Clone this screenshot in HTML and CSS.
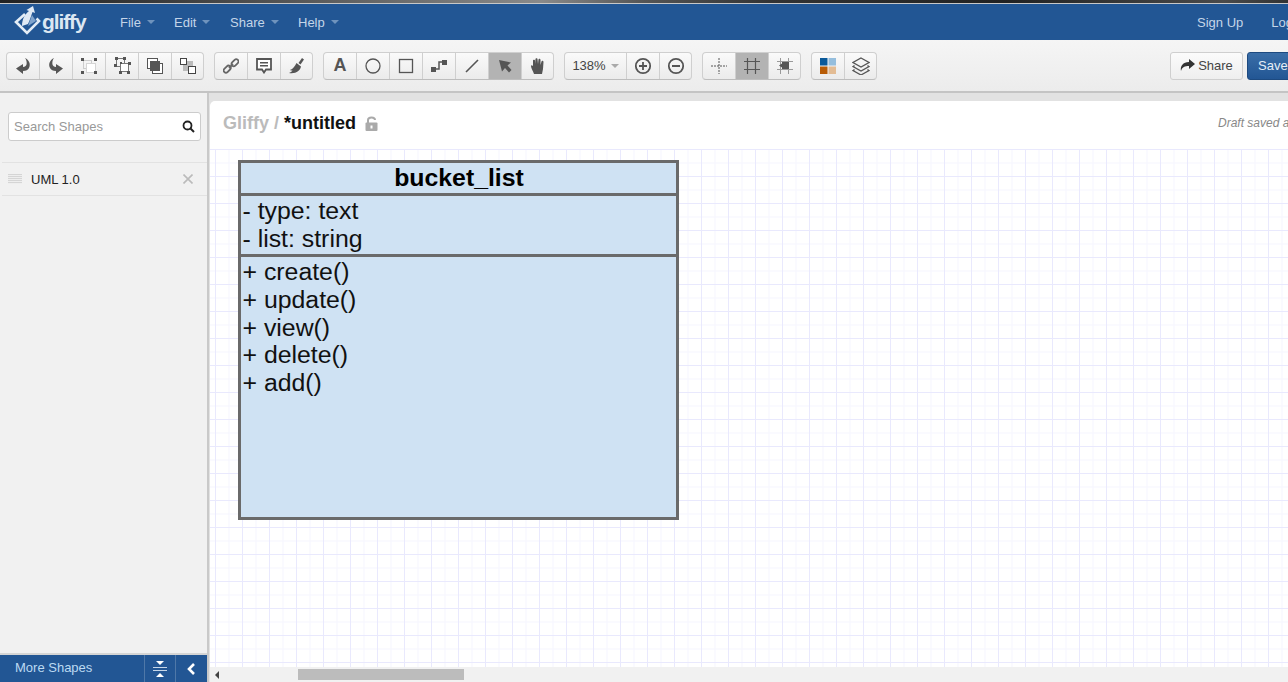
FILE: index.html
```html
<!DOCTYPE html>
<html lang="en">
<head>
    <meta charset="UTF-8">
    <title>Gliffy</title>
    <link rel="stylesheet" href="styles.css">
</head>
<body>
    <div id="app">
        <div class="top-strip"></div>
        <div class="navbar">
            <div class="logo">
                <svg width="28" height="30" viewBox="0 0 28 30">
                    <path d="M11 8 L2 16 L13 27 L25 15 L22.500 12.500" fill="none" stroke="#e4edf6" stroke-width="2.600"/>
                    <path d="M8 20 C8 13 11 8 15 5 L12.500 4 L19 0 L21 7 L18.500 6 C17 10 16 14 14 18 Z" fill="#dfe9f4"/>
                    <path d="M14 20 L18 9 L22 15 Z" fill="#7fa3cc"/>
                </svg>
                <span class="logo-text">gliffy</span>
            </div>
            <div class="menu">
                <span class="menu-item item-file">File<i class="caret"></i></span>
                <span class="menu-item item-edit">Edit<i class="caret"></i></span>
                <span class="menu-item item-share">Share<i class="caret"></i></span>
                <span class="menu-item">Help<i class="caret"></i></span>
            </div>
            <div class="account">
                <span class="signup">Sign Up</span>
                <span>Log In</span>
            </div>
        </div>

        <div class="toolbar">
            <div class="btn-group">
                <button class="tool"><svg width="16" height="18" viewBox="0 0 16 18"><path d="M10 1 C14 3 16 7 14 11 C13 13 11 14 8 14 V17 L1 11.500 L8 7 V10 C10 10 11 9 11.500 7.500 C12 5.500 11.500 3 10 1 Z" fill="#555"/></svg></button>
                <button class="tool"><svg width="16" height="18" viewBox="0 0 16 18"><path d="M6 1 C2 3 0 7 2 11 C3 13 5 14 8 14 V17 L15 11.500 L8 7 V10 C6 10 5 9 4.500 7.500 C4 5.500 4.500 3 6 1 Z" fill="#555"/></svg></button>
                <button class="tool"><svg width="16" height="16" viewBox="0 0 16 16"><rect x="2.500" y="2.500" width="8" height="8" fill="none" stroke="#ccc"/><rect x="5.500" y="5.500" width="9" height="9" fill="#fff" stroke="#d5d5d5"/><path d="M0 0h3v3H0zM13 0h3v3h-3zM0 13h3v3H0zM13 13h3v3h-3z" fill="#555"/></svg></button>
                <button class="tool"><svg width="17" height="17" viewBox="0 0 17 17"><rect x="2.500" y="1.500" width="8" height="8" fill="none" stroke="#777"/><rect x="6.500" y="6.500" width="8" height="8" fill="#fff" stroke="#777"/><path d="M1 0h3v3H1zM9 0h3v3H9zM0 7h3v3H0zM6 5h2v2H6zM14 5h3v3h-3zM5 14h3v3H5zM13 14h3v3h-3z" fill="#555"/></svg></button>
                <button class="tool"><svg width="16" height="16" viewBox="0 0 16 16"><rect x="0.500" y="0.500" width="10" height="10" fill="#fff" stroke="#555"/><rect x="5.500" y="5.500" width="10" height="10" fill="#fff" stroke="#555"/><rect x="3" y="3" width="10" height="10" fill="#555"/></svg></button>
                <button class="tool"><svg width="16" height="16" viewBox="0 0 16 16"><rect x="3" y="3" width="10" height="10" fill="#bbb"/><rect x="0.500" y="0.500" width="6" height="6" fill="#fff" stroke="#444"/><rect x="8.500" y="8.500" width="7" height="7" fill="#fff" stroke="#444"/></svg></button>
            </div>
            <div class="btn-group">
                <button class="tool"><svg width="16" height="16" viewBox="0 0 16 16"><g fill="none" stroke="#666" stroke-width="1.800"><rect x="0" y="9" width="8" height="4.500" rx="2.200" transform="rotate(-45 4 11)"/><rect x="8" y="2.500" width="8" height="4.500" rx="2.200" transform="rotate(-45 12 4.800)"/><path d="M6 10 L10 6"/></g></svg></button>
                <button class="tool"><svg width="16" height="16" viewBox="0 0 16 16"><path d="M1 1h14v10.500h-5l-2 3-2-3H1z" fill="#fff" stroke="#555" stroke-width="1.800"/><path d="M4 4.800h8M4 7.800h8" stroke="#555" stroke-width="1.400"/></svg></button>
                <button class="tool"><svg width="18" height="18" viewBox="0 0 18 18"><path d="M10.500 6 L14 1 L16 2.500 L12.500 7.500 Z" fill="#555"/><path d="M8.500 6 L13 9.500 C12 14 8 17 1 16 C3.500 15 4.500 13.500 4.500 13.500 C3.500 13.500 2.500 13.500 2 13 C5 12 7 9 8.500 6 Z" fill="#555"/></svg></button>
            </div>
            <div class="btn-group">
                <button class="tool letter">A</button>
                <button class="tool"><svg width="16" height="16" viewBox="0 0 16 16"><circle cx="8" cy="8" r="7" fill="none" stroke="#555" stroke-width="1.300"/></svg></button>
                <button class="tool"><svg width="16" height="16" viewBox="0 0 16 16"><rect x="1.500" y="1.500" width="13" height="13" fill="none" stroke="#555" stroke-width="1.300"/></svg></button>
                <button class="tool"><svg width="18" height="14" viewBox="0 0 18 14"><path d="M1 8h5v5H1zM12 1h5v5h-5z" fill="#555"/><path d="M6 10h3V3h3" fill="none" stroke="#555" stroke-width="1.500"/></svg></button>
                <button class="tool"><svg width="16" height="16" viewBox="0 0 16 16"><path d="M2 14 L14 2" stroke="#555" stroke-width="1.600"/></svg></button>
                <button class="tool active"><svg width="14" height="14" viewBox="0 0 14 14"><path d="M1 1 L13 3.500 L9.500 6.500 L13.500 11 L11 13.500 L7 9 L4 12.500 Z" fill="#555"/></svg></button>
                <button class="tool"><svg width="14" height="16" viewBox="0 0 14 16"><path d="M3 16 C2 13 0 10 0 8 C0 7 1 7 2 8 L2 2.500 C2 1.500 4 1.500 4 2.500 L4 6 L4.500 1 C4.500 0 6.500 0 6.500 1 L7 6 L7.500 1.500 C7.500 0.500 9.500 0.500 9.500 2 L9.500 7 L10.500 3.500 C10.500 2.500 12.500 2.500 12.500 4 L12 11 L11 16 Z" fill="#555"/></svg></button>
            </div>
            <div class="btn-group">
                <button class="tool zoom-level">138%<i class="caret grey"></i></button>
                <button class="tool"><svg width="18" height="18" viewBox="0 0 18 18"><circle cx="9" cy="9" r="7.200" fill="none" stroke="#555" stroke-width="1.800"/><path d="M5 9h8M9 5v8" stroke="#555" stroke-width="1.800"/></svg></button>
                <button class="tool"><svg width="18" height="18" viewBox="0 0 18 18"><circle cx="9" cy="9" r="7.200" fill="none" stroke="#555" stroke-width="1.800"/><path d="M5 9h8" stroke="#555" stroke-width="1.800"/></svg></button>
            </div>
            <div class="btn-group">
                <button class="tool"><svg width="16" height="16" viewBox="0 0 16 16"><path d="M0 8h16M8 0v16" stroke="#555" stroke-dasharray="2 1"/></svg></button>
                <button class="tool active"><svg width="16" height="16" viewBox="0 0 16 16"><path d="M0 3.500h16M0 11.500h16M3.500 0v16M11.500 0v16" stroke="#555" stroke-width="1.200"/></svg></button>
                <button class="tool"><svg width="16" height="16" viewBox="0 0 16 16"><path d="M0 3.500h16M0 11.500h16M3.500 0v16M11.500 0v16" stroke="#999"/><rect x="5" y="4" width="7" height="7" fill="#555"/><path d="M2 7.500 L5 5.500 V9.500 Z" fill="#555"/></svg></button>
            </div>
            <div class="btn-group">
                <button class="tool"><svg width="16" height="16" viewBox="0 0 16 16"><rect width="7.500" height="7.500" fill="#0b5a9a"/><rect x="8.500" width="7.500" height="7.500" fill="#95bedd"/><rect y="8.500" width="7.500" height="7.500" fill="#b85c06"/><rect x="8.500" y="8.500" width="7.500" height="7.500" fill="#e3bc94"/></svg></button>
                <button class="tool"><svg width="18" height="18" viewBox="0 0 18 18"><g fill="none" stroke="#555" stroke-width="1.300"><path d="M9 1 L17 5.500 L9 10 L1 5.500 Z"/><path d="M2.500 8.500 L1 9.500 L9 14 L17 9.500 L15.500 8.500"/><path d="M2.500 12.500 L1 13.500 L9 18 L17 13.500 L15.500 12.500"/></g></svg></button>
            </div>
            <button class="share-btn"><svg width="15" height="13" viewBox="0 0 15 13"><path d="M9 0 L15 5 L9 10 V7 C5 7 2 8 1 12 C0 7 3 3 9 3 Z" fill="#333"/></svg>Share</button>
            <button class="save-btn">Save</button>
        </div>

        <div class="shadow-bar"></div>

        <div class="workspace">
            <div class="sidebar">
                <div class="search">
                    <span class="search-hint">Search Shapes</span>
                    <svg width="13" height="13" viewBox="0 0 13 13"><circle cx="5.500" cy="5.500" r="4" fill="none" stroke="#222" stroke-width="1.800"/><path d="M8.500 8.500 L12 12" stroke="#222" stroke-width="2"/></svg>
                </div>
                <div class="library-row">
                    <span class="handle"></span>
                    <span class="library-name">UML 1.0</span>
                    <svg width="10" height="10" viewBox="0 0 10 10"><path d="M0.500 0.500 L9.500 9.500 M9.500 0.500 L0.500 9.500" stroke="#bbb" stroke-width="1.600"/></svg>
                </div>
                <div class="more-shapes">
                    <span class="more-label">More Shapes</span>
                    <span class="more-btn"><svg width="14" height="16" viewBox="0 0 14 16"><path d="M3 0h8L7 4zM7 12l4 4H3z" fill="#fff"/><path d="M0 6.500h14M0 9.500h14" stroke="#c5d6e8"/></svg></span>
                    <span class="more-btn"><svg width="10" height="12" viewBox="0 0 10 12"><path d="M8 1 L3 6 L8 11" fill="none" stroke="#fff" stroke-width="2.600"/></svg></span>
                </div>
            </div>

            <div class="main-panel">
                <div class="doc-header">
                    <span class="doc-brand">Gliffy / </span><span class="doc-name">*untitled</span>
                    <svg class="lock" width="13" height="15" viewBox="0 0 13 15"><path d="M3 7V4C3 0.500 10 0.500 10 4" fill="none" stroke="#aaa" stroke-width="2"/><rect x="0.500" y="6.500" width="12" height="8.500" rx="1" fill="#aaa"/><rect x="5.500" y="9.500" width="2" height="3" fill="#fff"/></svg>
                    <span class="draft">Draft saved at 3:42 PM</span>
                </div>
                <div class="canvas">
                    <div class="uml-class">
                        <div class="uml-title">bucket_list</div>
                        <div class="uml-attrs">- type: text<br>- list: string</div>
                        <div class="uml-methods">+ create()<br>+ update()<br>+ view()<br>+ delete()<br>+ add()</div>
                    </div>
                </div>
                <div class="scrollbar">
                    <i class="scroll-arrow"></i>
                    <div class="scroll-thumb"></div>
                </div>
            </div>
        </div>
    </div>
</body>
</html>
```

FILE: styles.css
```css
html, body {
    margin: 0;
    padding: 0;
    overflow: hidden;
}
body {
    font-family: "Liberation Sans", Arial, sans-serif;
    background: #e2e2e2;
}
#app {
    width: 1288px;
    height: 682px;
    display: flex;
    flex-direction: column;
    overflow: hidden;
}
.top-strip {
    height: 4px;
    box-sizing: border-box;
    border-bottom: 1px solid #c8c8c8;
    background: linear-gradient(90deg, #222 0, #3a3a3a 12%, #8a8a8a 42%, #555 50%, #333 60%, #222 78%, #4a4a4a 95%, #333 100%);
    flex-shrink: 0;
}
.navbar {
    height: 36px;
    background: #225694;
    display: flex;
    align-items: center;
    color: #c4d5e8;
    font-size: 13px;
    flex-shrink: 0;
}
.logo {
    display: flex;
    align-items: center;
    width: 120px;
    padding-left: 14px;
    box-sizing: border-box;
    color: #dce7f2;
}
.logo svg {
    margin-top: -3px;
}
.logo-text {
    font-size: 21px;
    font-weight: bold;
    letter-spacing: -1.100px;
}
.menu {
    display: flex;
}
.menu-item {
    display: inline-flex;
    align-items: center;
}
.item-file { width: 54px; }
.item-edit { width: 56px; }
.item-share { width: 68px; }
.caret {
    width: 0;
    height: 0;
    margin-left: 6px;
    border-left: 4px solid transparent;
    border-right: 4px solid transparent;
    border-top: 4px solid #6f93bd;
}
.caret.grey {
    border-top-color: #aaa;
    margin-left: 5px;
}
.account {
    margin-left: auto;
    display: flex;
    gap: 28px;
    width: 91px;
    white-space: nowrap;
}
.toolbar {
    height: 53px;
    background: linear-gradient(#f5f5f5, #ececec);
    border-bottom: 2px solid #c4c4c4;
    box-sizing: border-box;
    display: flex;
    align-items: center;
    gap: 10px;
    padding: 0 0 0 6px;
    flex-shrink: 0;
}
.btn-group {
    display: flex;
    height: 28px;
    border: 1px solid #cfcfcf;
    border-bottom-color: #bdbdbd;
    border-radius: 4px;
    box-sizing: border-box;
    overflow: hidden;
    flex-shrink: 0;
    background: linear-gradient(#fafafa, #ebebeb);
}
.tool {
    width: 33px;
    padding: 0;
    border: 0;
    border-right: 1px solid #cfcfcf;
    background: transparent;
    display: flex;
    align-items: center;
    justify-content: center;
    font-family: inherit;
    flex-shrink: 0;
}
.tool:last-child {
    width: 31px;
    border-right: 0;
}
.tool.active {
    background: #b3b3b3;
}
.letter {
    font-size: 18px;
    font-weight: bold;
    color: #555;
}
.zoom-level {
    width: 62px;
    font-size: 13px;
    color: #444;
}
.share-btn {
    margin-left: 283px;
    width: 73px;
    height: 28px;
    border: 1px solid #cfcfcf;
    border-radius: 3px;
    background: linear-gradient(#fbfbfb, #eee);
    font-family: inherit;
    font-size: 13px;
    color: #444;
    display: flex;
    align-items: center;
    justify-content: center;
    gap: 3px;
    padding: 0;
    flex-shrink: 0;
}
.save-btn {
    margin-left: -6px;
    width: 60px;
    height: 28px;
    border: 1px solid #1d4a80;
    border-radius: 3px;
    background: linear-gradient(#3a6ea8, #225694);
    color: #e6eef7;
    font-family: inherit;
    font-size: 13px;
    text-align: left;
    padding: 0 0 0 10px;
    flex-shrink: 0;
}
.shadow-bar {
    height: 8px;
    background: #e2e2e2;
    flex-shrink: 0;
}
.workspace {
    flex: 1;
    display: flex;
    min-height: 0;
}
.sidebar {
    width: 207px;
    margin-top: -8px;
    background: #f1f1f1;
    border-right: 2px solid #c9c9c9;
    display: flex;
    flex-direction: column;
    flex-shrink: 0;
}
.search {
    margin: 19px 6px 0 8px;
    height: 29px;
    background: #fff;
    border: 1px solid #ccc;
    border-radius: 3px;
    box-sizing: border-box;
    display: flex;
    align-items: center;
    justify-content: space-between;
    padding: 0 5px 0 5px;
}
.search-hint {
    font-size: 13px;
    color: #999;
}
.library-row {
    margin: 21px 0 0 2px;
    height: 34px;
    border-top: 1px solid #e2e2e2;
    border-bottom: 1px solid #e2e2e2;
    box-sizing: border-box;
    display: flex;
    align-items: center;
    padding: 0 14px 0 6px;
}
.handle {
    width: 14px;
    height: 10px;
    background: repeating-linear-gradient(#d5d5d5 0, #d5d5d5 1px, #eee 1px, #eee 2px);
}
.library-name {
    font-size: 13px;
    color: #222;
    margin-left: 9px;
    flex: 1;
}
.more-shapes {
    margin-top: auto;
    height: 29px;
    border-top: 2px solid #d5d5d5;
    background: #225694;
    box-sizing: border-box;
    display: flex;
    color: #bcdaf2;
    font-size: 13px;
}
.more-label {
    width: 144px;
    padding-left: 15px;
    box-sizing: border-box;
    line-height: 25px;
}
.more-btn {
    width: 31px;
    border-left: 1px solid #4f78a8;
    box-sizing: border-box;
    display: flex;
    align-items: center;
    justify-content: center;
}
.main-panel {
    flex: 1;
    min-width: 0;
    margin-left: 1px;
    display: flex;
    flex-direction: column;
}
.doc-header {
    height: 48px;
    background: #fff;
    border-top-left-radius: 5px;
    display: flex;
    align-items: center;
    padding: 0 0 4px 13px;
    box-sizing: border-box;
    font-size: 18px;
    font-weight: bold;
    white-space: pre;
    flex-shrink: 0;
    overflow: hidden;
}
.doc-brand {
    color: #bbb;
}
.doc-name {
    color: #111;
}
.lock {
    margin: 1px 0 0 9px;
    flex-shrink: 0;
}
.draft {
    margin-left: 840px;
    font-size: 12px;
    font-weight: normal;
    font-style: italic;
    color: #888;
    flex-shrink: 0;
}
.canvas {
    position: relative;
    flex: 1;
    background-color: #fff;
    background-image:
        linear-gradient(90deg, #e9e9fd 1px, transparent 1px),
        linear-gradient(#e9e9fd 1px, transparent 1px),
        linear-gradient(90deg, #f5f5fe 1px, transparent 1px),
        linear-gradient(#f5f5fe 1px, transparent 1px);
    background-size: 27px 27px, 27px 27px, 13.500px 13.500px, 13.500px 13.500px;
    background-position: 5px 0, 5px 0, 5px 0, 5px 0;
    overflow: hidden;
}
.uml-class {
    position: absolute;
    left: 28px;
    top: 11px;
    width: 441px;
    height: 360px;
    border: 3px solid #6a6a6a;
    box-sizing: border-box;
    background: #cfe2f3;
    color: #111;
    font-size: 24.840px;
    line-height: 27.600px;
    display: flex;
    flex-direction: column;
}
.uml-title {
    height: 32.500px;
    border-bottom: 3px solid #6a6a6a;
    box-sizing: border-box;
    text-align: center;
    font-weight: bold;
    color: #000;
    padding: 1px 0 0 1px;
}
.uml-attrs {
    height: 61px;
    border-bottom: 3px solid #6a6a6a;
    box-sizing: border-box;
    padding: 1.500px 0 0 1.500px;
}
.uml-methods {
    padding: 1.900px 0 0 1.500px;
}
.scrollbar {
    height: 15px;
    background: #f1f1f1;
    display: flex;
    align-items: center;
    flex-shrink: 0;
}
.scroll-arrow {
    width: 0;
    height: 0;
    margin-left: 5px;
    border-top: 4px solid transparent;
    border-bottom: 4px solid transparent;
    border-right: 4px solid #444;
}
.scroll-thumb {
    width: 166px;
    height: 11px;
    margin-left: 79px;
    background: #bcbcbc;
}
```
